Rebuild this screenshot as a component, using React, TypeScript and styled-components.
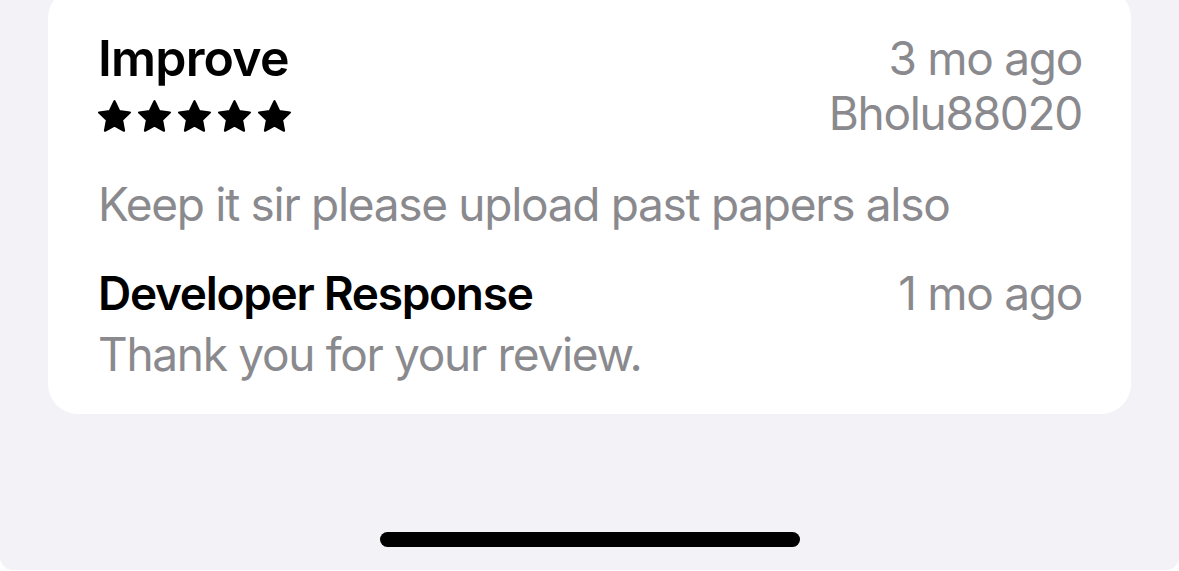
import React from "react";
import styled, { createGlobalStyle } from "styled-components";

const GlobalStyle = createGlobalStyle`
  html, body {
    margin: 0;
    padding: 0;
    background: #ffffff;
  }
  body {
    font-family: Inter, "Liberation Sans", Arial, sans-serif;
    -webkit-font-smoothing: antialiased;
  }
`;

const Screen = styled.div`
  box-sizing: border-box;
  width: 1179px;
  height: 570px;
  background: #f2f2f7;
  border-radius: 0 0 13px 13px;
  overflow: hidden;
  display: flex;
  flex-direction: column;
  padding: 0 48px;
`;

const Card = styled.section`
  margin-top: -12px;
  background: #ffffff;
  border-radius: 30px;
  padding: 43px 49px 32px 50px;
  display: flex;
  flex-direction: column;
`;

const Row = styled.div`
  display: flex;
  justify-content: space-between;
  align-items: flex-start;
`;

const Column = styled.div<{ $align?: "flex-start" | "flex-end" }>`
  display: flex;
  flex-direction: column;
  align-items: ${(p) => p.$align ?? "flex-start"};
`;

const Title = styled.div`
  font-size: 50px;
  line-height: 55px;
  font-weight: 600;
  letter-spacing: -0.8px;
  color: #000000;
`;

const Meta = styled.div`
  font-size: 46px;
  line-height: 55px;
  font-weight: 400;
  letter-spacing: -1.3px;
  color: #8a8a8e;
`;

const Stars = styled.div`
  height: 55px;
  display: flex;
  align-items: center;
  gap: 7px;
  padding-top: 4px;
  box-sizing: border-box;
`;

const Body = styled.p<{ $gap: number }>`
  margin: ${(p) => p.$gap}px 0 0;
  font-size: 46px;
  line-height: 55px;
  font-weight: 400;
  letter-spacing: -1.3px;
  color: #8a8a8e;
`;

const ResponseRow = styled(Row)`
  margin-top: 34px;
`;

const ResponseTitle = styled.div`
  font-size: 46px;
  line-height: 55px;
  font-weight: 600;
  letter-spacing: -1.3px;
  color: #000000;
`;

const Spacer = styled.div`
  flex: 1;
`;

const HomeIndicator = styled.div`
  align-self: center;
  width: 420px;
  height: 15px;
  border-radius: 8px;
  background: #000000;
  margin-bottom: 23px;
`;

const Star = () => (
  <svg width="33" height="32" viewBox="1.6 1.5 20.8 20" aria-hidden="true">
    <path
      d="M12 2.2l2.95 6.2 6.75.9-4.95 4.7 1.25 6.75L12 17.45l-6 3.3 1.25-6.75L2.3 9.3l6.75-.9L12 2.2z"
      fill="#000"
      stroke="#000"
      strokeWidth="1.4"
      strokeLinejoin="round"
    />
  </svg>
);

export default function App() {
  return (
    <>
      <GlobalStyle />
      <Screen>
        <Card>
          <Row>
            <Column>
              <Title>Improve</Title>
              <Stars>
                <Star />
                <Star />
                <Star />
                <Star />
                <Star />
              </Stars>
            </Column>
            <Column $align="flex-end">
              <Meta>3 mo ago</Meta>
              <Meta>Bholu88020</Meta>
            </Column>
          </Row>
          <Body $gap={36}>Keep it sir please upload past papers also</Body>
          <ResponseRow>
            <ResponseTitle>Developer Response</ResponseTitle>
            <Meta>1 mo ago</Meta>
          </ResponseRow>
          <Body $gap={6}>Thank you for your review.</Body>
        </Card>
        <Spacer />
        <HomeIndicator />
      </Screen>
    </>
  );
}
